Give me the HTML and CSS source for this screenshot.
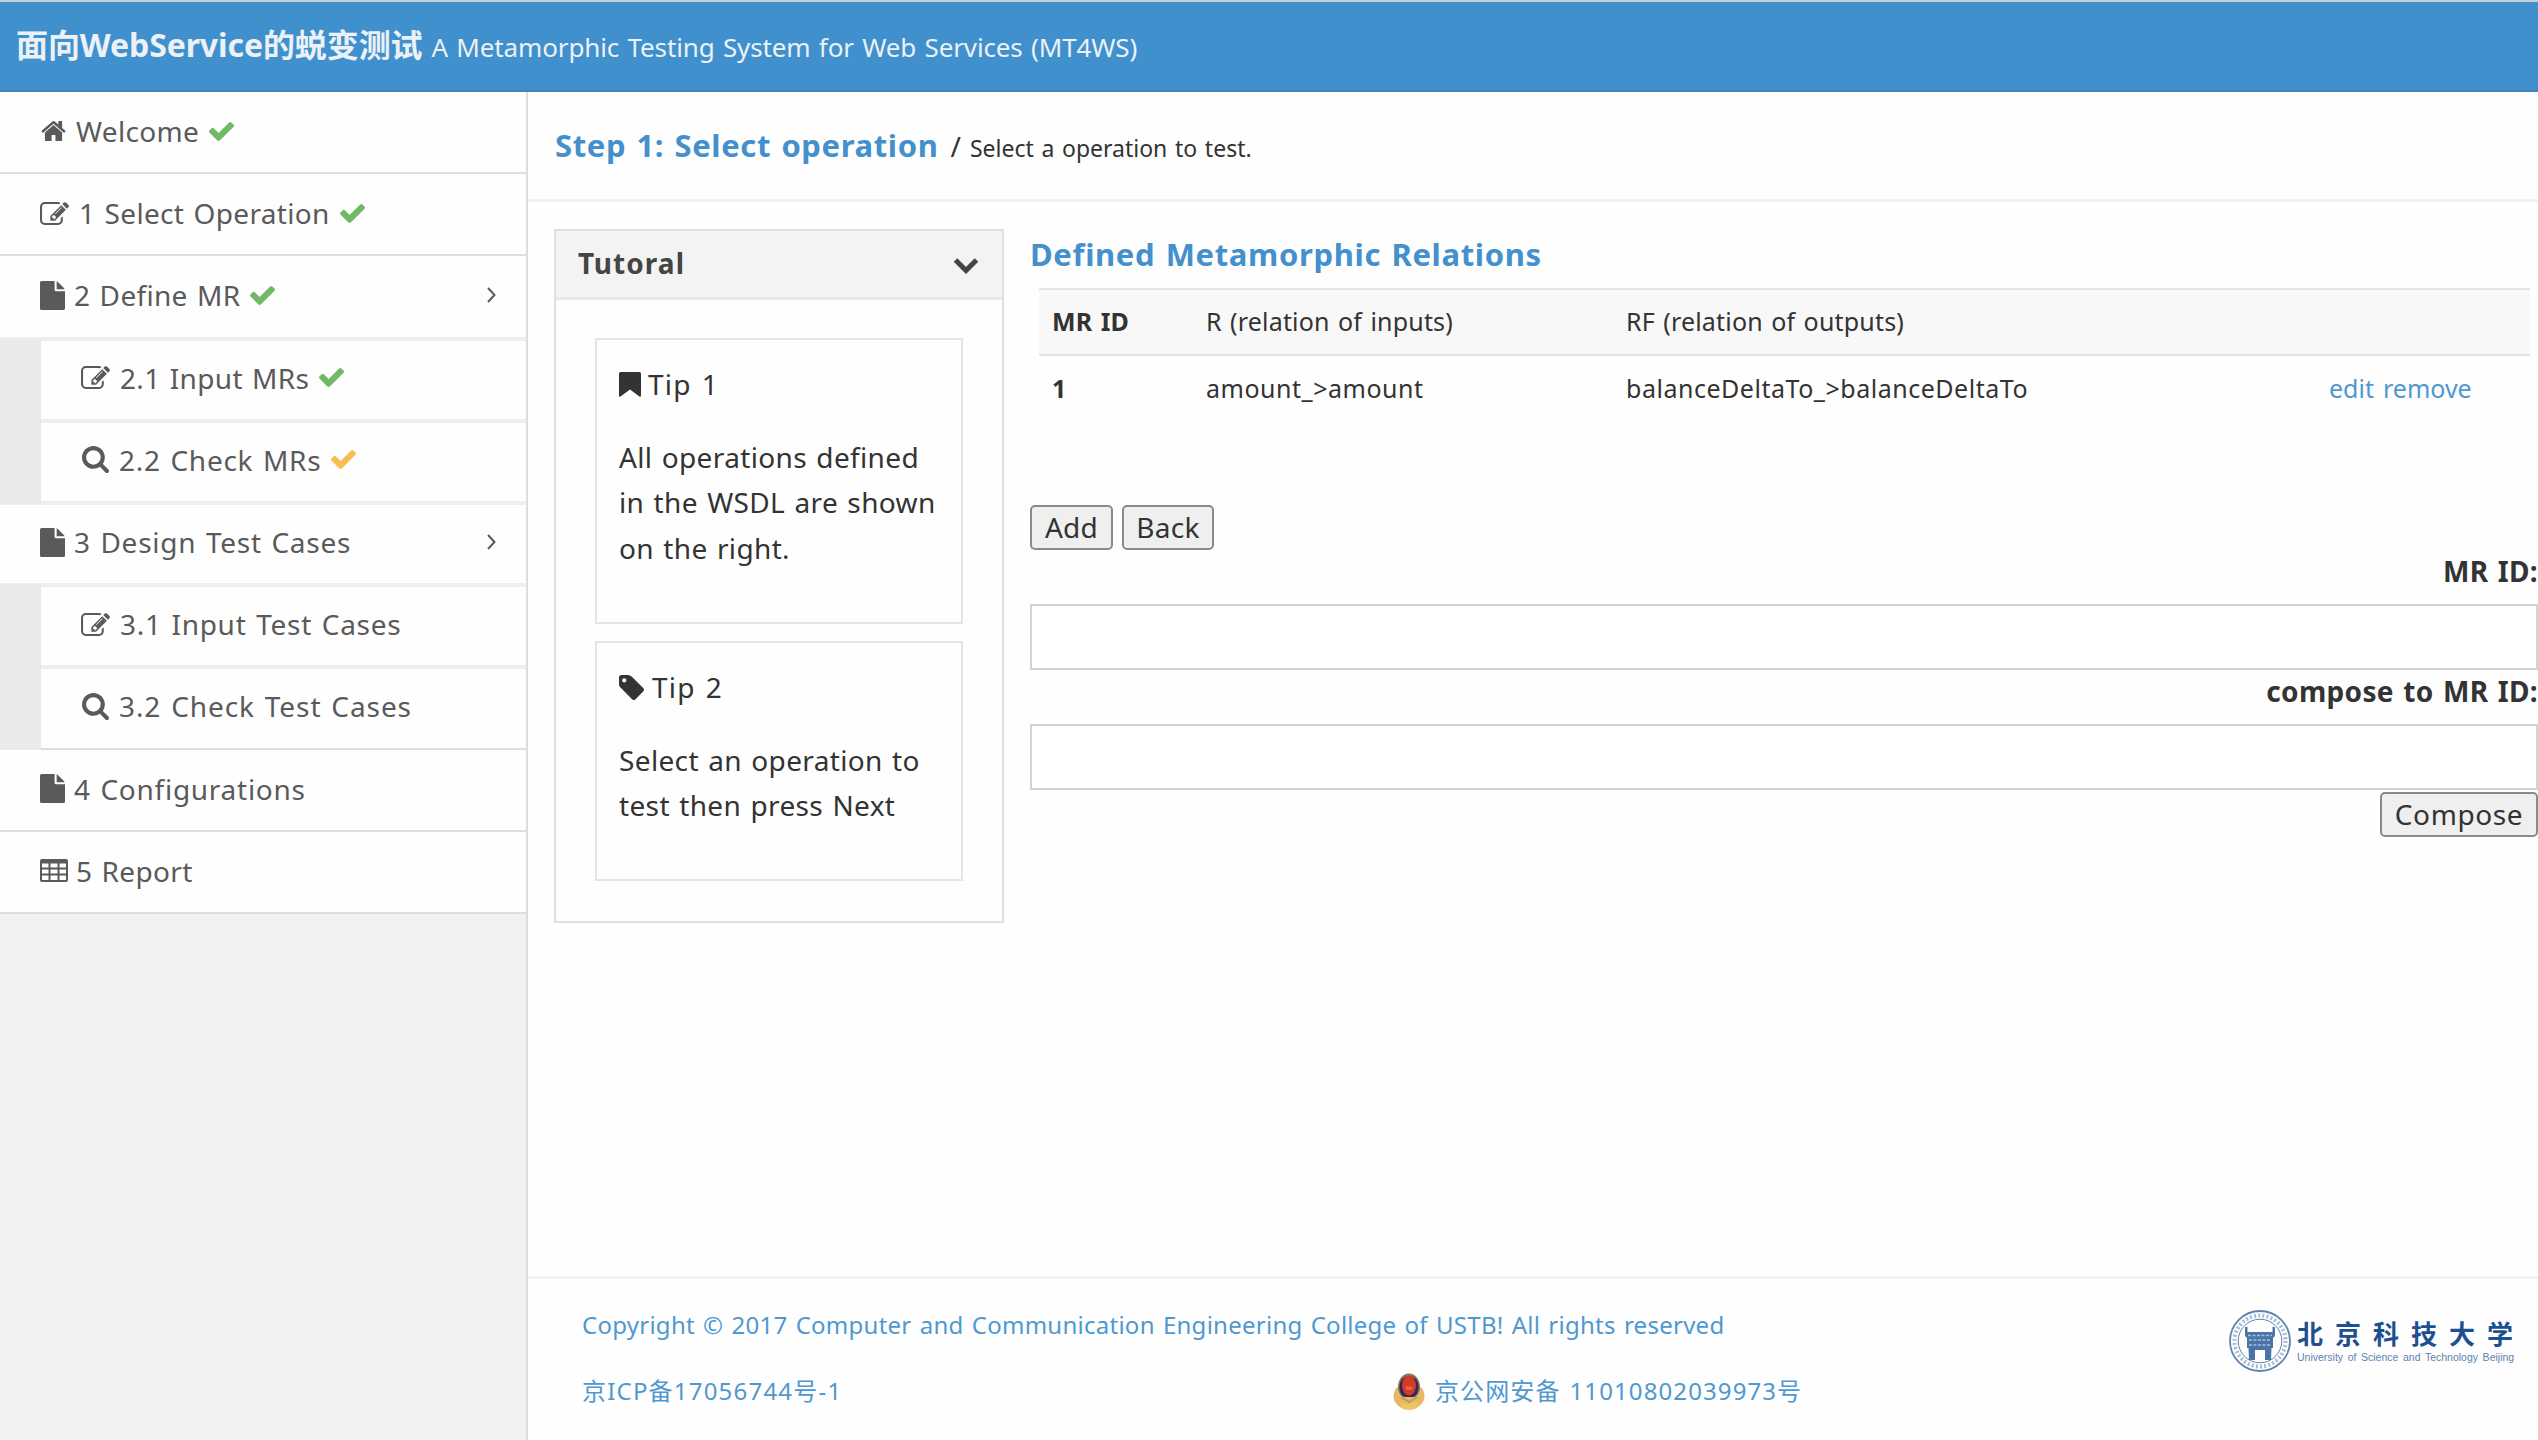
FILE: index.html
```html
<!DOCTYPE html>
<html lang="zh-CN">
<head>
<meta charset="utf-8">
<title>MT4WS</title>
<link rel="stylesheet" href="styles.css">
</head>
<body>
<svg class="sprite" aria-hidden="true">
  <symbol id="i-home" viewBox="60 250 1670 1290" preserveAspectRatio="none"><path d="M1472 992v480q0 26-19 45t-45 19h-384v-384h-256v384h-384q-26 0-45-19t-19-45v-480q0-1 .5-3t.5-3l575-474 575 474q1 2 1 6zm223-69l-62 74q-8 9-21 11h-3q-13 0-21-7l-692-577-692 577q-12 8-24 7-13-2-21-11l-62-74q-8-10-7-23.5t11-21.5l719-599q32-26 76-26t76 26l244 204v-195q0-14 9-23t23-9h192q14 0 23 9t9 23v408l219 182q10 8 11 21.5t-7 23.5z"/></symbol>
  <symbol id="i-check" viewBox="121 334 1550 1188" preserveAspectRatio="none"><path d="M1671 566q0 40-28 68l-724 724-136 136q-28 28-68 28t-68-28l-136-136-362-362q-28-28-28-68t28-68l136-136q28-28 68-28t68 28l294 295 656-657q28-28 68-28t68 28l136 136q28 28 28 68z"/></symbol>
  <symbol id="i-edit" viewBox="0 128 1792 1408" preserveAspectRatio="none"><path d="M888 1184l116-116-152-152-116 116v56h96v96h56zm440-720q-16-16-33 1l-350 350q-17 17-1 33t33-1l350-350q17-17 1-33zm80 594v190q0 119-84.5 203.5t-203.5 84.5h-832q-119 0-203.5-84.5t-84.5-203.5v-832q0-119 84.5-203.5t203.5-84.5h832q63 0 117 25 15 7 18 23 3 17-9 29l-49 49q-14 14-32 8-23-6-45-6h-832q-66 0-113 47t-47 113v832q0 66 47 113t113 47h832q66 0 113-47t47-113v-126q0-13 9-22l64-64q15-15 35-7t20 29zm-96-738l288 288-672 672h-288v-288zm444 132l-92 92-288-288 92-92q28-28 68-28t68 28l152 152q28 28 28 68t-28 68z"/></symbol>
  <symbol id="i-file" viewBox="0 0 24 28" preserveAspectRatio="none"><path d="M0 1.5Q0 0 1.500 0H14v8.500Q14 10 15.500 10H24V26.500Q24 28 22.500 28H1.500Q0 28 0 26.500zM16 .3Q16.800.7 17.400 1.300L22.700 6.600Q23.300 7.200 23.700 8H16z"/></symbol>
  <symbol id="i-search" viewBox="64 128 1664 1664"><path d="M1216 832q0-185-131.500-316.500t-316.500-131.500-316.500 131.500-131.500 316.500 131.500 316.500 316.500 131.500 316.500-131.500 131.500-316.500zm512 832q0 52-38 90t-90 38q-54 0-90-38l-343-342q-179 124-399 124-143 0-273.500-55.500t-225-150-150-225-55.500-273.500 55.500-273.500 150-225 225-150 273.500-55.500 273.500 55.500 225 150 150 225 55.500 273.500q0 220-124 399l343 343q37 37 37 90z"/></symbol>
  <symbol id="i-table" viewBox="0 0 28 23"><path fill-rule="evenodd" d="M2 0H26Q28 0 28 2V21Q28 23 26 23H2Q0 23 0 21V2Q0 0 2 0zM2 4.500V8.500H8.500V4.500zM10.500 4.500V8.500H17.500V4.500zM19.500 4.500V8.500H26V4.500zM2 10.500V14.500H8.500V10.500zM10.500 10.500V14.500H17.500V10.500zM19.500 10.500V14.500H26V10.500zM2 16.500V21H8.500V16.500zM10.500 16.500V21H17.500V16.500zM19.500 16.500V21H26V16.500z"/></symbol>
  <symbol id="i-bookmark" viewBox="0 0 21 25" preserveAspectRatio="none"><path d="M1.500 0H19.500Q21 0 21 1.500V23.500Q21 25 19.500 24.600L10.500 17.500 1.500 24.600Q0 25 0 23.500V1.500Q0 0 1.500 0z"/></symbol>
  <symbol id="i-tag" viewBox="128 128 1515 1515" preserveAspectRatio="none"><path d="M576 448q0-53-37.500-90.500t-90.500-37.500-90.500 37.500-37.500 90.500 37.500 90.500 90.500 37.500 90.500-37.500 37.500-90.500zm1067 576q0 53-37 90l-491 492q-39 37-91 37-53 0-90-37l-715-716q-38-37-64.500-101t-26.500-117v-416q0-52 38-90t90-38h416q53 0 117 26.500t102 64.500l715 714q37 39 37 91z"/></symbol>
</svg>

<header class="topbar">
  <h1 class="brand">面向WebService的蜕变测试</h1>
  <span class="tagline">A Metamorphic Testing System for Web Services (MT4WS)</span>
</header>

<div class="layout">
  <nav class="sidebar">
    <a class="item"><svg class="ic home"><use href="#i-home"/></svg><span>Welcome</span><svg class="ic check"><use href="#i-check"/></svg></a>
    <a class="item"><svg class="ic edit"><use href="#i-edit"/></svg><span>1 Select Operation</span><svg class="ic check"><use href="#i-check"/></svg></a>
    <a class="item soft"><svg class="ic file"><use href="#i-file"/></svg><span>2 Define MR</span><svg class="ic check"><use href="#i-check"/></svg><svg class="arrow" viewBox="0 0 9 16"><path d="M1 1l6.500 7L1 15"/></svg></a>
    <div class="submenu">
      <a class="item soft top"><svg class="ic edit"><use href="#i-edit"/></svg><span>2.1 Input MRs</span><svg class="ic check"><use href="#i-check"/></svg></a>
      <a class="item soft top"><svg class="ic search"><use href="#i-search"/></svg><span class="wide">2.2 Check MRs</span><svg class="ic check warn"><use href="#i-check"/></svg></a>
    </div>
    <a class="item soft top"><svg class="ic file"><use href="#i-file"/></svg><span class="wide">3 Design Test Cases</span><svg class="arrow" viewBox="0 0 9 16"><path d="M1 1l6.500 7L1 15"/></svg></a>
    <div class="submenu">
      <a class="item soft top"><svg class="ic edit"><use href="#i-edit"/></svg><span class="wide">3.1 Input Test Cases</span></a>
      <a class="item top"><svg class="ic search"><use href="#i-search"/></svg><span class="wider">3.2 Check Test Cases</span></a>
    </div>
    <a class="item"><svg class="ic file"><use href="#i-file"/></svg><span class="wide">4 Configurations</span></a>
    <a class="item"><svg class="ic table"><use href="#i-table"/></svg><span>5 Report</span></a>
  </nav>

  <main class="main">
    <div class="step">
      <h2 class="step-title">Step 1: Select operation</h2>
      <span class="slash">/</span>
      <span class="step-note">Select a operation to test.</span>
    </div>

    <div class="content">
      <section class="panel">
        <div class="panel-head"><h3 class="panel-title">Tutoral</h3><svg class="chev" viewBox="0 0 26 17"><path d="M2.500 3L13 13.500 23.500 3"/></svg></div>
        <div class="panel-body">
          <article class="tip">
            <h4 class="tip-title"><svg class="ic bookmark"><use href="#i-bookmark"/></svg><span>Tip 1</span></h4>
            <p class="tip-text">All operations defined<br>in the WSDL are shown<br>on the right.</p>
          </article>
          <article class="tip tip-short">
            <h4 class="tip-title"><svg class="ic tag"><use href="#i-tag"/></svg><span>Tip 2</span></h4>
            <p class="tip-text">Select an operation to<br>test then press Next</p>
          </article>
        </div>
      </section>

      <section class="relations">
        <h3 class="rel-title">Defined Metamorphic Relations</h3>
        <div class="grid grid-head">
          <b>MR ID</b><span>R (relation of inputs)</span><span>RF (relation of outputs)</span><span></span>
        </div>
        <div class="grid grid-row">
          <b>1</b><span>amount_&gt;amount</span><span>balanceDeltaTo_&gt;balanceDeltaTo</span><span class="links"><a>edit</a><a>remove</a></span>
        </div>
        <div class="buttons"><button class="btn add">Add</button><button class="btn back">Back</button></div>
        <form class="compose">
          <label class="label">MR ID:</label>
          <input class="field" type="text">
          <label class="label">compose to MR ID:</label>
          <input class="field" type="text">
          <button class="btn submit" type="button">Compose</button>
        </form>
      </section>
    </div>

    <footer class="footer">
      <div class="legal">
        <div class="copy">Copyright © 2017 Computer and Communication Engineering College of USTB! All rights reserved</div>
        <div class="records">
          <a class="icp">京ICP备17056744号-1</a>
          <svg class="badge" viewBox="0 0 32 37"><ellipse cx="16" cy="23" rx="15.500" ry="13.500" fill="#e3b968"/><path d="M7 28Q16 34 25 28L23 35.500Q16 38 9 35.500z" fill="#eec565"/><path d="M16 .5C23 .5 27 7 27 14 27 20 24 24 20 24H12C8 24 5 20 5 14 5 7 9 .5 16 .5z" fill="#8f7556"/><path d="M16 3C22 3 25.500 8 25.500 14 25.500 19 23.500 24 19 24H13C8.500 24 6.500 19 6.500 14 6.500 8 10 3 16 3z" fill="#33265f"/><ellipse cx="16" cy="12.500" rx="7" ry="10" fill="#cf3b24"/><path d="M12 13.500H20L19 17H13z" fill="#e4673a"/><path d="M8 24L16 29 24 24" fill="none" stroke="#c9974a" stroke-width="1.500"/></svg>
          <a class="psb">京公网安备 11010802039973号</a>
        </div>
      </div>
      <div class="ustb">
        <svg class="seal" viewBox="0 0 62 62"><g fill="none" stroke="#5f83b0"><circle cx="31" cy="31" r="30" stroke-width="1.800"/><circle cx="31" cy="31" r="25.500" stroke-width="4" stroke-dasharray="2 2.200" opacity=".55"/><circle cx="31" cy="31" r="21.800" stroke-width="1"/></g><path fill="#4a74a8" d="M16 17h2.500v5h25v-5H46v9l-2 2v10h-1.500L42 50h-6V40H26v10h-6l-.5-12H18V28l-2-2z"/><path d="M19 25.500h24M20 30h22M20 35h22" stroke="#a9bfd9" stroke-width="1.500" stroke-dasharray="3 1.500"/></svg>
        <div class="ustb-text"><span class="ustb-cn">北京科技大学</span><span class="ustb-en">University of Science and Technology Beijing</span></div>
      </div>
    </footer>
  </main>
</div>
</body>
</html>
```
FILE: styles.css
```css
* { box-sizing: border-box; }
body {
  margin: 0;
  height: 1440px;
  overflow: hidden;
  display: flex;
  flex-direction: column;
  background: #fefefe;
  color: #333;
  font-family: "Noto Sans", "Noto Sans CJK SC", sans-serif;
  font-size: 28px;
  word-spacing: .06em;
}
h1, h2, h3, h4, p { margin: 0; }
.sprite { position: absolute; width: 0; height: 0; }
.ic { fill: currentColor; flex: none; }

.topbar {
  height: 92px;
  flex: none;
  display: flex;
  align-items: baseline;
  padding: 19px 0 0 16px;
  background: #4090cd;
  border-top: 2px solid #c5d0d8;
  border-bottom: 2px solid #4384b8;
  color: #ebf1f6;
  white-space: nowrap;
}
.brand { font-size: 32px; line-height: 48px; font-weight: 700; letter-spacing: -.1px; }
.tagline { font-size: 26px; line-height: 48px; margin-left: 9px; letter-spacing: -.12px; }

.layout { flex: 1; display: flex; min-height: 0; }
.sidebar {
  width: 528px;
  flex: none;
  background: #f2f2f2;
  border-right: 2px solid #ddd;
  letter-spacing: .32px;
}
.wide { letter-spacing: .73px; }
.wider { letter-spacing: .92px; }
.item {
  height: 82.200px;
  display: flex;
  align-items: center;
  padding: 0 30px 2px 40px;
  background: #fefefe;
  border-bottom: 2px solid #ddd;
  color: #5a5a5a;
  white-space: nowrap;
}
.soft { border-bottom-color: #eee; }
.top { border-top: 2px solid #eee; padding-bottom: 4px; }
.submenu { padding-left: 41px; background: #eaeaea; }
.home { width: 25px; height: 20px; margin: 0 10px 0 1px; }
.edit { width: 29px; height: 23px; margin-right: 10px; }
.file { width: 25px; height: 29px; margin-right: 9px; }
.search { width: 27px; height: 27px; margin: 0 10px 0 1px; }
.table { width: 28px; height: 23px; margin-right: 8px; }
.check { width: 25px; height: 19px; margin-left: 10px; color: #71b966; }
.warn { color: #f6be55; }
.arrow { width: 9px; height: 16px; margin-left: auto; fill: none; stroke: #5a5a5a; stroke-width: 2; }

.main { flex: 1; min-width: 0; display: flex; flex-direction: column; }
.step {
  height: 110px;
  flex: none;
  display: flex;
  align-items: baseline;
  padding: 31px 0 0 27px;
  border-bottom: 3px solid #f2f2f2;
}
.step-title { font-size: 31px; line-height: 44px; letter-spacing: .62px; color: #4490cd; }
.slash { margin-left: 12px; }
.step-note { font-size: 23px; margin-left: 9px; }

.content { flex: 1; display: flex; align-items: flex-start; padding: 27px 0 0 26px; }
.panel { width: 450px; height: 694px; flex: none; border: 2px solid #e0e0e0; }
.panel-head {
  height: 69px;
  display: flex;
  align-items: center;
  justify-content: space-between;
  padding: 0 23px 2px 22px;
  background: #f3f3f3;
  border-bottom: 3px solid #e8e8e8;
}
.panel-title { font-size: 28px; letter-spacing: 1.050px; color: #444; }
.chev { width: 26px; height: 17px; fill: none; stroke: #444; stroke-width: 5; margin-top: 4px; }
.panel-body { padding: 38px 39px 0; display: flex; flex-direction: column; gap: 17px; }
.tip { height: 286px; border: 2px solid #e4e4e4; padding: 22px 0 0 22px; white-space: nowrap; }
.tip-short { height: 240px; }
.tip-title { display: flex; align-items: center; font-size: 28px; line-height: 45px; font-weight: 400; letter-spacing: 1.200px; }
.bookmark { width: 22px; height: 25px; margin-right: 7px; }
.tag { width: 25px; height: 25px; margin-right: 8px; }
.tip-text { margin-top: 28px; line-height: 45.300px; letter-spacing: .36px; }

.relations { flex: 1; margin-left: 26px; }
.rel-title { font-size: 31px; line-height: 44px; margin-top: 3px; letter-spacing: .65px; color: #4490cd; }
.grid {
  display: grid;
  grid-template-columns: 154px 420px 1fr 201px;
  margin: 0 8px 0 9px;
  padding-left: 13px;
  align-items: center;
  font-size: 25px;
  line-height: 36px;
}
.grid-head {
  height: 68px;
  margin-top: 12px;
  padding-bottom: 2px;
  background: #f8f8f8;
  border-top: 2px solid #e4e4e4;
  border-bottom: 2px solid #e4e4e4;
  letter-spacing: .18px;
}
.grid-row { height: 64px; padding-bottom: 1px; letter-spacing: .52px; }
.links { display: flex; gap: 9px; color: #4f98d0; letter-spacing: 0; }
.buttons { display: flex; gap: 9px; margin-top: 85px; }
.btn {
  height: 45px;
  padding: 0 0 2px;
  background: #efefef;
  border: 2px solid #8a8a8a;
  border-radius: 5px;
  color: #333;
  font: inherit;
  letter-spacing: .3px;
  word-spacing: inherit;
}
.add { width: 83px; }
.back { width: 92px; }
.compose { display: flex; flex-direction: column; align-items: flex-end; }
.label { height: 54px; font-weight: 700; line-height: 43px; letter-spacing: .35px; }
.field { width: 100%; height: 66px; background: #fff; border: 2px solid #d2d2d2; }
.submit { width: 158px; margin-top: 2px; letter-spacing: .6px; }

.footer {
  height: 164px;
  flex: none;
  display: flex;
  justify-content: space-between;
  padding: 31px 13px 0 54px;
  border-top: 3px solid #f2f2f2;
  font-size: 24px;
  color: #4f98d0;
}
.legal { margin-top: -3px; }
.copy { height: 66px; line-height: 36px; letter-spacing: .26px; white-space: nowrap; }
.records { display: flex; align-items: center; height: 36px; line-height: 36px; white-space: nowrap; }
.icp { width: 811px; letter-spacing: 1.200px; }
.badge { width: 32px; height: 37px; margin: 1px 10px 0 0; }
.psb { letter-spacing: 1.100px; }
.ustb { display: flex; align-items: flex-start; color: #1d5091; }
.seal { width: 62px; height: 62px; margin-right: 6px; }
.ustb-text { display: flex; flex-direction: column; padding-top: 7px; }
.ustb-cn { font-size: 26px; line-height: 34px; font-weight: 700; letter-spacing: 12px; height: 33px; }
.ustb-en { font: 10.500px/14px "Liberation Sans", sans-serif; color: #5d82b1; }
```
